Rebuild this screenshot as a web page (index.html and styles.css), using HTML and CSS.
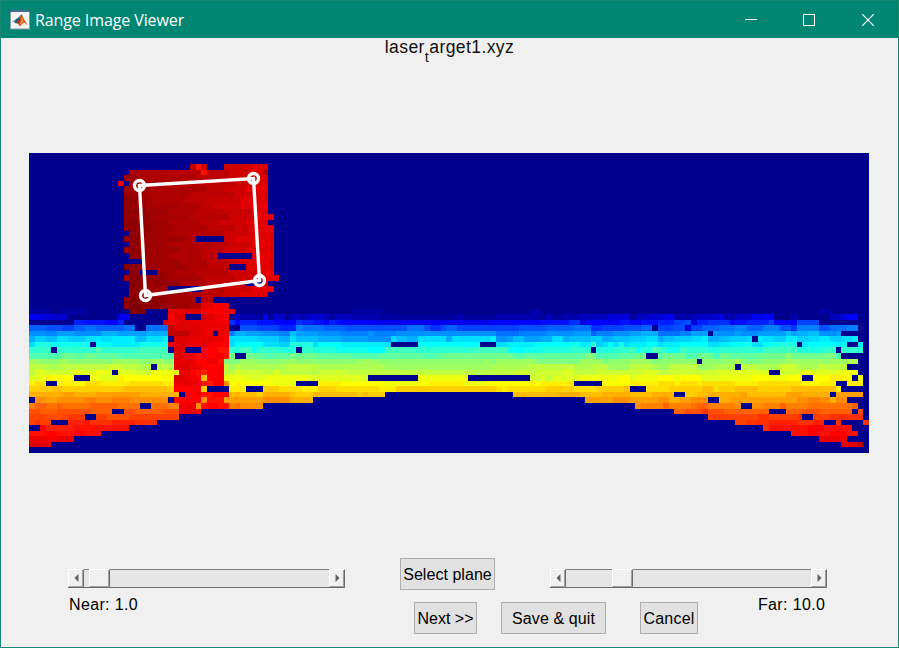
FILE: index.html
```html
<!DOCTYPE html>
<html lang="en">
<head>
<meta charset="utf-8">
<title>Range Image Viewer</title>
<link rel="stylesheet" href="styles.css">
</head>
<body>
<div class="window">
  <header class="titlebar">
    <svg class="app-icon" width="20" height="20" viewBox="0 0 20 20">
      <rect x=".5" y=".5" width="19" height="18.5" fill="#f4f4f4" stroke="#8b9c9c"/>
      <rect x="0" y="0" width="20" height="2" fill="#426c91"/>
      <path d="M2.5 11.3 6 9.2 8.3 10.5 6.2 13.4Z" fill="#4a91b9"/>
      <path d="M6 9.2Q8.7 8.2 11.7 4L8.7 10.8 6.2 13.4 5 12.5Z" fill="#25577a"/>
      <path d="M11.7 4Q10 9.5 6.2 13.4Q8 13 9.6 16.2Q12 15.2 13.5 12.5Q15 12.5 17.5 15.3Q14 9.5 11.7 4Z" fill="#d95a1c"/>
      <path d="M11.7 4Q11 8.5 7.6 12.2L8.6 13.4Q11 10 11.7 4Z" fill="#7e241c"/>
      <path d="M12 6Q13 9 12.6 12L10 15Q12 10 12 6Z" fill="#f2a33b"/>
    </svg>
    <span class="caption">Range Image Viewer</span>
    <svg class="controls" width="130" height="14" viewBox="0 0 130 14" fill="none" stroke="#fff" shape-rendering="crispEdges">
      <path d="M0 5.5h12"/>
      <path d="M58.5 .5h11v11h-11z"/>
      <path d="M117.2 .2 128.8 11.8M128.8 .2 117.2 11.8" shape-rendering="auto" stroke-width="1.2"/>
    </svg>
  </header>
  <main class="figure">
    <h1 class="plot-title">laser<span class="subscript">t</span>arget1.xyz</h1>
    <div class="plot">
      <canvas id="range" width="840" height="300"></canvas>
      <svg class="selection" width="840" height="300" viewBox="0 0 840 300" fill="none" stroke="#fff">
        <path d="M110.5 32.5 224.5 25.5 230.5 127.5 116.5 142.5Z" stroke-width="3.4"/>
        <g stroke-width="3.4">
          <circle cx="110.5" cy="32.5" r="5"/>
          <circle cx="224.5" cy="25.5" r="5"/>
          <circle cx="230.5" cy="127.5" r="5"/>
          <circle cx="116.5" cy="142.5" r="5"/>
        </g>
      </svg>
    </div>
    <div class="row row-sliders">
      <div class="slider near">
        <span class="cap"><svg width="5" height="8"><path d="M4.5 0v8L.5 4z"/></svg></span>
        <span class="track before"></span><span class="thumb"></span><span class="track after"></span>
        <span class="cap end"><svg width="5" height="8"><path d="M.5 0v8l4-4z"/></svg></span>
      </div>
      <button class="btn select">Select plane</button>
      <div class="slider far">
        <span class="cap"><svg width="5" height="8"><path d="M4.5 0v8L.5 4z"/></svg></span>
        <span class="track before"></span><span class="thumb"></span><span class="track after"></span>
        <span class="cap end"><svg width="5" height="8"><path d="M.5 0v8l4-4z"/></svg></span>
      </div>
    </div>
    <div class="row row-actions">
      <span class="value near-value">Near: 1.0</span>
      <button class="btn next">Next &gt;&gt;</button>
      <button class="btn save">Save &amp; quit</button>
      <button class="btn cancel">Cancel</button>
      <span class="value far-value">Far: 10.0</span>
    </div>
  </main>
</div>
<script src="range.js"></script>
</body>
</html>
```
FILE: styles.css
```css
* { box-sizing: border-box; }
body { margin: 0; overflow: hidden; font-family: "Liberation Sans", Arial, sans-serif; color: #000; }
.window { width: 899px; height: 648px; background: #f0f0f0; border: 1px solid #198873; display: flex; flex-direction: column; }
.titlebar { height: 37px; flex: none; background: #008673; display: flex; align-items: center; padding: 0 23px 0 9px; }
.app-icon { margin-top: 1px; }
.caption { flex: 1; margin-left: 5px; color: #fff; font: 16px/22px "Open Sans", "Noto Sans", sans-serif; letter-spacing: -0.1px; }
.controls { flex: none; margin-top: 2px; }
.figure { flex: 1; display: flex; flex-direction: column; }
.plot-title { margin: 0; height: 115px; text-align: center; font-size: 17.6px; line-height: 18px; font-weight: 400; letter-spacing: 0.38px; color: #111; }
.subscript { font-size: 14.5px; line-height: 0; position: relative; top: 9px; }
.plot { position: relative; width: 840px; height: 300px; margin-left: 28px; }
.plot canvas { display: block; }
.selection { position: absolute; left: 0; top: 0; }
.row { display: flex; font-size: 16px; }
.row-sliders { margin-top: 105px; height: 32px; padding-left: 67px; }
.row-actions { margin-top: 12px; height: 32px; padding-left: 68px; }
.btn { height: 32px; padding: 2px 0 0; border: 1px solid #adadad; background: #e1e1e1; font: 16px/28px "Liberation Sans", Arial, sans-serif; color: #000; white-space: nowrap; }
.select { width: 95px; margin: 0 55px; letter-spacing: 0.05px; }
.next { width: 63px; }
.save { width: 105px; margin-left: 24px; letter-spacing: 0.1px; }
.cancel { width: 58px; margin-left: 34px; letter-spacing: 0.2px; }
.value { line-height: 18px; margin-top: -6px; white-space: nowrap; letter-spacing: 0.35px; }
.near-value { width: 345px; }
.far-value { margin-left: 60px; }
.slider { width: 277px; height: 19px; margin-top: 11px; display: flex; border-bottom: 1px solid #696969; }
.cap, .thumb { background: #f0f0f0; border: 1px solid #fff; border-right-color: #696969; border-bottom-color: #a0a0a0; box-shadow: inset -1px 0 #a0a0a0; }
.cap { width: 16px; display: flex; align-items: center; padding-left: 5px; fill: #606060; }
.thumb { width: 21px; }
.track { background: #e5e5e5; border-top: 1px solid #808080; }
.near .before { width: 5px; }
.far .before { width: 46px; }
.after { flex: 1; }
```
FILE: range.js
```js
// Range grid: each row is a list of "column:level" runs; level 1 is no return.
const COLS = 151, ROWS = 54;
const rows = {
2:"29:60 30:55 31:59 32:1 35:59 40:58 43:1",
3:"18:61 25:60.5 31:55 32:60 36:59 40:58 42:61 43:1",
4:"17:62 20:61 30:60 36:59 40:58 43:1",
5:"16:57 17:1 18:62 24:61 30:60 37:59 41:58 43:1",
6:"17:62 22:61 28:61 32:60 35:59 39:57.5 43:1",
7:"17:62 21:61 29:60 37:59 41:58 43:1",
8:"17:63 19:62 22:61 28:60 32:59.5 38:58 43:1",
9:"17:62.5 21:61.5 27:61 31:60 33:59 38:58 41:57 43:1",
10:"17:63 21:62 25:61 30:60 35:59.5 40:58 43:1",
11:"17:62.5 22:61.5 29:60.5 36:59 40:57.5 44:1",
12:"17:63 21:62 25:61 31:60 34:59 39:58 43:1",
13:"17:63 22:62 26:61 32:60 37:59 40:57.5 44:1",
14:"18:63 21:62 25:61 29:60.5 35:59 40:58 44:1",
15:"17:62.5 18:63 20:62 28:61 30:1 35:59 37:58 44:1",
16:"18:63 20:62 25:61 30:60.5 33:60 36:59 40:57.5 44:1",
17:"17:61.5 18:63 20:62 27:61 31:60 35:59 39:58 44:1",
18:"18:63 21:62 25:61 31:60 34:1 40:57.5 44:1",
19:"21:62 27:61 32:60 36:59 38:58 44:1",
20:"17:63.5 18:63 20:62 28:61 32:60 36:1 39:58 44:1",
21:"18:63 20:1 23:62 26:61 30:60.5 36:59 41:57.5 44:1",
22:"17:61 18:63.5 20:62.5 25:61.5 31:60 37:59 41:57.5 45:1",
23:"18:63.5 21:62.5 27:61 32:60 39:1 42:58 43:1",
24:"18:63 21:62 25:1 31:60.5 35:59 40:57.5 44:1",
25:"18:63 20:63.5 22:62 28:61 31:60 35:59 38:58 43:1",
26:"17:63 18:63.5 22:63 25:62 30:1 31:60 33:1",
27:"17:62.5 18:64 20:63 24:62 29:61 31:57.5 33:56.5 36:1",
28:"0:2 4:1 6:2.5 10:1 18:64 21:1 25:57.5 28:58 31:56.5 37:1 58:2 64:1 90:3 92:1 142:3 144:1",
29:"0:7 2:6 4:5 7:1 16:7 18:1 25:56 26:58 28:1 31:58 33:57 35:56 36:1 37:4 38:3 41:2 42:7 43:2 44:5 46:1 47:4 49:3 50:5 53:4 54:2 55:4 58:3 63:2 77:3 78:2 84:3 91:2 93:4 94:2 96:3 99:4 104:6 108:2 109:4 111:5 114:7 116:3 119:4 121:5 124:7 125:3 127:5 130:7 132:8 134:1 137:3 138:1 144:4 146:6 147:8 149:1",
30:"0:1 8:10 10:9 14:8 16:10 17:1 24:58 25:57 27:58 29:57.5 32:57 36:11 37:8 38:10 41:9 44:8 48:11 49:10 51:9 53:8 54:10 55:9 56:8 62:7 83:8 92:9 97:11 99:6 100:8 104:7 106:9 108:8 110:9 113:10 116:12 118:13 119:6 120:10 122:11 126:8 127:9 129:10 133:12 134:8 137:7 138:12 142:1",
31:"0:14 3:13 6:12 8:14 10:15 12:14 17:15 19:1 21:15 25:60 26:58 31:57 33:57.5 36:1 38:13 41:12 45:10 48:16 49:15 53:14 57:13 68:15 71:13 72:11 74:13 75:14 77:12 88:13 93:14 98:15 101:11 103:12 107:13 110:14 112:1 113:12 116:13 118:6 119:12 121:14 124:15 127:16 129:14 132:16 135:13 137:11 138:16 142:13 144:15 147:16 149:1",
32:"0:17 3:16.5 5:18 8:17 13:19 16:18 21:19 25:60 29:58 31:57 33:1 34:57 36:16 37:19 39:18 42:17 45:16 47:20 48:18 52:17 56:16 61:17 62:16 66:17 84:15 88:16 93:17 98:18 101:14 102:16 105:17 108:18 110:19 113:15 117:16 119:18 122:1 123:17 127:18 128:17 131:18 136:20 137:18 138:19 140:20 142:17 145:18 146:1",
33:"0:19 1:21 3:20 5:22 7:21 10:22 12:23 13:22 15:23 19:20 21:22 24:23 25:1 26:58 29:57.5 33:57 35:56 36:22 41:21 45:19 47:22 48:20 52:19 56:18 61:17 65:22 66:20 68:19 70:22 75:19 76:22 83:23 84:17 86:18 87:20 89:18 92:19 94:22 96:19 97:20 101:21 103:19 105:20 108:21 111:22 113:19 114:20 116:21 119:22 121:23 122:19 124:20 126:21 129:22 130:1 131:23 132:22 134:21 136:23 138:21 140:22 142:23 144:21 146:22 148:23 149:1",
34:"0:22 1:25 2:26 4:24 5:25 10:24 11:1 12:24 15:23 20:25 25:57 26:58 28:57 31:58 32:56.5 36:22 37:24 42:22 45:21 47:26 51:22 52:24 56:23 64:22 65:1 70:24 81:1 84:22 86:23 91:24 97:25 99:23 101:27 102:21 103:22 104:24 105:22 106:25 107:22 108:23 111:24 113:22 114:23 117:24 122:22 124:23 126:24 128:25 130:22 132:24 133:25 135:26 138:1 139:23 140:24 145:23 146:24 147:1 149:23 150:1",
35:"0:27 4:1 5:27 12:29 13:27 19:28 25:1 26:58 28:1 31:56 34:55 36:27 37:26 38:28 40:25 41:27 45:26 48:1 49:27 51:26 55:25 61:24 64:28 69:27 80:28 86:25 87:24 89:25 92:26 97:27 101:1 102:26 105:27 108:28 109:25 110:27 111:26 112:29 113:28 114:26 115:25 117:28 118:27 122:26 124:27 131:26 132:28 138:26 143:27 145:1 146:27 150:1",
36:"0:29 6:31 8:30 10:31 12:30 16:29 26:58 28:57 30:55 31:56 34:57 35:55 36:31 37:1 39:31 41:30 43:29 44:30 47:31 52:30 58:29 63:30 71:29 73:30 75:31 87:29 89:30 100:32 102:29 106:30 109:31 111:1 113:30 114:31 118:29 120:31 123:28 124:31 126:30 131:31 136:33 137:31 143:32 145:29 146:1",
37:"0:34 2:33 5:34 7:33 14:32 15:34 19:33 22:34 24:33 26:57.5 30:56 32:57 34:55 35:32 38:34 41:33 47:34 48:33 59:34 63:33 82:34 83:32 84:34 91:32 99:34 103:32 104:33 108:34 112:32 113:33 120:1 121:33 126:34 127:35 128:32 132:33 136:34 143:33 144:34 147:35 149:1",
38:"0:36 3:35 6:36 14:37 17:36 20:35 22:1 23:36 25:35 26:58 29:57 31:56 35:36 36:34 37:36 38:35 46:36 52:35 64:34 83:35 90:36 97:37 98:35 101:36 104:34 108:36 112:35 113:34 115:36 120:34 123:35 127:1 128:36 131:35 135:37 138:35 142:37 143:36 147:1",
39:"0:36 1:38 3:37 8:39 9:38 12:39 14:38 15:1 16:38 19:37 22:39 27:57 29:56 30:55 31:54 32:56 35:36 37:38 38:37 42:36 44:38 45:36 51:35 52:37 57:36 80:35 81:36 87:37 90:36 91:37 96:38 98:36 102:37 110:38 113:36 115:37 120:36 121:37 124:38 133:1 135:37 138:38 139:39 141:38 146:39 149:1",
40:"0:38 2:39 3:41 4:40 8:1 11:39 13:38 16:41 17:40 26:58 28:57 30:56 31:44 32:56 35:39 39:38 42:39 50:38 60:37 61:1 70:39 79:1 90:37 92:38 93:36 94:38 99:39 106:40 108:38 109:39 113:40 116:39 117:40 121:38 124:39 130:40 133:39 136:40 139:1 141:40 144:41 147:40 148:1 149:39 150:1",
41:"0:41 1:42 3:1 5:41 8:40 10:42 13:41 18:42 24:41 26:57 28:58 29:57 31:55 32:54 33:56 35:47 36:40 37:41 38:40 44:39 48:1 52:41 56:40 64:39 70:40 72:41 78:39 83:40 90:41 91:40 92:41 97:42 98:1 103:40 108:41 113:42 116:41 117:42 120:41 121:42 127:41 131:42 139:40 142:41 145:1 147:41 150:1",
42:"0:43 4:44 6:43 17:44 25:43 26:56 31:43 32:1 36:41 39:1 42:43 45:42 49:41 52:43 55:42 63:41 66:43 84:42 85:41 86:42 93:43 98:42 102:43 107:44 108:1 111:42 115:43 121:44 123:42 124:43 127:44 131:43 137:44 145:41 146:1",
43:"0:45 6:46 8:45 12:46 20:45 27:1 28:56 30:57 31:55 33:56 36:44 37:45 38:44 41:43 42:45 47:44 48:43 51:45 52:44 59:43 60:44 61:43 64:1 87:44 95:45 99:44 103:45 108:44 112:45 116:1 118:43 120:44 122:45 128:46 129:44 136:46 139:45 144:1 145:46 150:1",
44:"0:1 1:47 3:46 5:47 10:48 12:47 15:48 18:47 25:1 26:56 31:47 32:55 35:46 42:47 47:45 51:1 100:46 105:47 108:46 113:47 115:45 117:46 119:47 122:1 124:45 126:46 138:47 140:48 142:47 144:45 145:47 147:1",
45:"0:48 1:50 3:49 5:50 6:49 11:50 16:49 20:1 22:49 25:48 27:57 30:47 31:55 32:56 34:55 36:48 37:49 38:47 42:1 109:47 110:48 114:50 115:48 119:49 120:50 122:48 127:47 128:1 130:47 132:48 135:50 136:48 140:49 148:50 149:1",
46:"0:51 2:50 5:51 11:50 15:1 17:51 19:50 24:51 27:57 29:58 30:56 31:1 116:50 118:51 121:53 122:51 125:50 133:1 136:50 139:51 142:50 148:1 149:51 150:1",
47:"0:52 3:51.5 7:52.5 10:1 12:52 14:51 18:52 27:1 122:52 131:53 133:52 138:53 139:1 141:52 144:53 150:1",
48:"0:52 1:53 2:52 4:1 7:54 10:55 11:53 15:54 19:53 23:1 127:52 129:53 133:54 138:53 141:54 143:1 145:53 146:1 150:53",
49:"0:1 2:56 3:54 8:55 18:1 132:53 133:55 140:56 143:55 148:1",
50:"0:55 3:56 5:55 8:56 10:55 13:1 137:55 140:56 142:55 144:56 147:55 149:1",
51:"0:57 3:56.5 5:57 8:1 142:57 147:1",
52:"0:58 3:57 4:1 146:57 147:58 149:60 150:1"
};
const unit = v => Math.round(255 * Math.max(0, Math.min(1, v)));
const jet = k => `rgb(${unit(Math.min((k - 24) / 16, (72 - k) / 16))},${unit(Math.min((k - 8) / 16, (56 - k) / 16))},${unit(Math.min((k + 8) / 16, (40 - k) / 16))})`;
const ctx = document.getElementById("range").getContext("2d");
ctx.fillStyle = jet(1);
ctx.fillRect(0, 0, 840, 300);
for (const [row, text] of Object.entries(rows)) {
  const runs = text.split(" ").map(s => s.split(":").map(Number));
  const y0 = Math.round(row * 300 / ROWS), y1 = Math.round((+row + 1) * 300 / ROWS);
  runs.forEach(([col, level], i) => {
    const end = i + 1 < runs.length ? runs[i + 1][0] : COLS;
    const x0 = Math.round(col * 840 / COLS), x1 = Math.round(end * 840 / COLS);
    ctx.fillStyle = jet(level);
    ctx.fillRect(x0, y0, x1 - x0, y1 - y0);
  });
}
```
